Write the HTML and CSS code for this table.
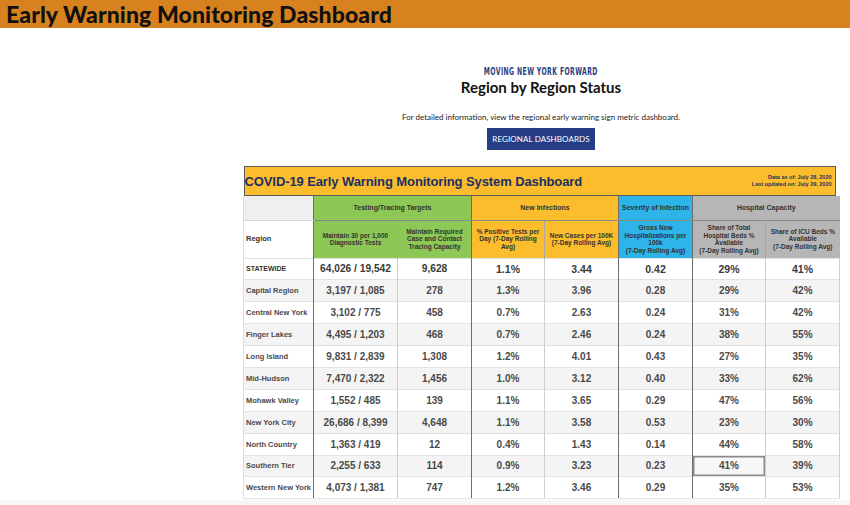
FILE: index.html
```html
<!DOCTYPE html>
<html>
<head>
<meta charset="utf-8">
<link rel="stylesheet" href="styles.css">
</head>
<body>
<header class="topbar"><h1>Early Warning Monitoring Dashboard</h1></header>
<main class="content">
  <div class="kicker"><span>MOVING NEW YORK FORWARD</span></div>
  <h2 class="status">Region by Region Status</h2>
  <p class="info">For detailed information, view the regional early warning sign metric dashboard.</p>
  <div class="btnwrap"><a class="btn">REGIONAL DASHBOARDS</a></div>
  <table class="dash">
    <colgroup>
      <col class="c-region"><col class="c2"><col class="c3"><col class="c4"><col class="c5"><col class="c6"><col class="c7"><col class="c8">
    </colgroup>
    <thead>
      <tr class="titlerow"><th colspan="8"><div class="titlebox"><span class="ttl">COVID-19 Early Warning Monitoring System Dashboard</span><span class="dates">Data as of: July 28, 2020<br>Last updated on: July 29, 2020</span></div></th></tr>
      <tr class="grouprow">
        <th class="blank"></th>
        <th colspan="2" class="green gl">Testing/Tracing Targets</th>
        <th colspan="2" class="yellow gl">New Infections</th>
        <th class="blue gl">Severity of Infection</th>
        <th colspan="2" class="gray gl">Hospital Capacity</th>
      </tr>
      <tr class="headrow">
        <th class="region">Region</th>
        <th class="green gl">Maintain 30 per 1,000 Diagnostic Tests</th>
        <th class="green">Maintain Required Case and Contact Tracing Capacity</th>
        <th class="yellow gl">% Positive Tests per Day (7-Day Rolling Avg)</th>
        <th class="yellow">New Cases per 100K (7-Day Rolling Avg)</th>
        <th class="blue gl">Gross New Hospitalizations per 100k<br>(7-Day Rolling Avg)</th>
        <th class="gray gl">Share of Total Hospital Beds % Available<br>(7-Day Rolling Avg)</th>
        <th class="gray">Share of ICU Beds % Available<br>(7-Day Rolling Avg)</th>
      </tr>
    </thead>
    <tbody>
      <tr class="state"><td class="region">STATEWIDE</td><td class="gl big">64,026 / 19,542</td><td class="big">9,628</td><td class="gl">1.1%</td><td>3.44</td><td class="gl">0.42</td><td class="gl">29%</td><td>41%</td></tr>
      <tr><td class="region">Capital Region</td><td class="gl big">3,197 / 1,085</td><td class="big">278</td><td class="gl">1.3%</td><td>3.96</td><td class="gl">0.28</td><td class="gl">29%</td><td>42%</td></tr>
      <tr><td class="region">Central New York</td><td class="gl big">3,102 / 775</td><td class="big">458</td><td class="gl">0.7%</td><td>2.63</td><td class="gl">0.24</td><td class="gl">31%</td><td>42%</td></tr>
      <tr><td class="region">Finger Lakes</td><td class="gl big">4,495 / 1,203</td><td class="big">468</td><td class="gl">0.7%</td><td>2.46</td><td class="gl">0.24</td><td class="gl">38%</td><td>55%</td></tr>
      <tr><td class="region">Long Island</td><td class="gl big">9,831 / 2,839</td><td class="big">1,308</td><td class="gl">1.2%</td><td>4.01</td><td class="gl">0.43</td><td class="gl">27%</td><td>35%</td></tr>
      <tr><td class="region">Mid-Hudson</td><td class="gl big">7,470 / 2,322</td><td class="big">1,456</td><td class="gl">1.0%</td><td>3.12</td><td class="gl">0.40</td><td class="gl">33%</td><td>62%</td></tr>
      <tr><td class="region">Mohawk Valley</td><td class="gl big">1,552 / 485</td><td class="big">139</td><td class="gl">1.1%</td><td>3.65</td><td class="gl">0.29</td><td class="gl">47%</td><td>56%</td></tr>
      <tr><td class="region">New York City</td><td class="gl big">26,686 / 8,399</td><td class="big">4,648</td><td class="gl">1.1%</td><td>3.58</td><td class="gl">0.53</td><td class="gl">23%</td><td>30%</td></tr>
      <tr><td class="region">North Country</td><td class="gl big">1,363 / 419</td><td class="big">12</td><td class="gl">0.4%</td><td>1.43</td><td class="gl">0.14</td><td class="gl">44%</td><td>58%</td></tr>
      <tr><td class="region">Southern Tier</td><td class="gl big">2,255 / 633</td><td class="big">114</td><td class="gl">0.9%</td><td>3.23</td><td class="gl">0.23</td><td class="gl focus">41%</td><td>39%</td></tr>
      <tr><td class="region">Western New York</td><td class="gl big">4,073 / 1,381</td><td class="big">747</td><td class="gl">1.2%</td><td>3.46</td><td class="gl">0.29</td><td class="gl">35%</td><td>53%</td></tr>
    </tbody>
  </table>
</main>
<div class="footband"></div>
</body>
</html>
```
FILE: styles.css
```css
* { box-sizing: border-box; }
html, body { margin: 0; padding: 0; background: #fff; }
body { font-family: "Liberation Sans", Arial, sans-serif; width: 850px; height: 505px; overflow: hidden; position: relative; }

.topbar { background: #d8821f; height: 28px; padding-left: 6px; }
.topbar h1 { margin: 0; font-family: Lato, "Open Sans", sans-serif; font-weight: 900; font-size: 23px; line-height: 28px; color: #111; letter-spacing: 0.1px; }

.content { margin-left: 243px; width: 596px; padding-top: 36px; text-align: center; }
.kicker { line-height: 12px; height: 12px; }
.kicker span { display: inline-block; font-family: "DejaVu Sans Condensed", "DejaVu Sans", sans-serif; font-stretch: condensed; font-weight: 700; font-size: 10px; color: #2c3e7e; letter-spacing: 0.6px; transform: scaleX(0.68); transform-origin: center; white-space: nowrap; }
.status { margin: 2px 0 0; font-family: Lato, sans-serif; font-weight: 700; font-size: 15px; line-height: 18px; color: #111; }
.info { margin: 16px 0 0; font-family: Lato, sans-serif; font-size: 8px; line-height: 10px; color: #222; }
.btnwrap { margin-top: 6px; }
.btn { display: inline-block; background: #243d86; color: #fff; font-family: Lato, sans-serif; font-size: 8px; width: 108px; height: 22px; line-height: 22px; letter-spacing: 0.1px; }

.dash { margin-top: 16px; border-collapse: collapse; table-layout: fixed; width: 596px; font-family: "Liberation Sans", Arial, sans-serif; }
.c-region { width: 70px; }
.c2 { width: 84px; }
.c3 { width: 74px; }
.c4 { width: 73px; }
.c5 { width: 74px; }
.c6 { width: 74px; }
.c7 { width: 73px; }
.c8 { width: 74px; }

.titlerow th { padding: 0 4px 0 0; height: 30px; }
.titlebox { display: flex; justify-content: space-between; align-items: center; height: 30px; background: #fbbd2c; border: 1.5px solid #5a5a5a; padding: 0 3px 0 0; }
.ttl { font-size: 13px; font-weight: 700; color: #1d2f66; letter-spacing: -0.1px; }
.dates { font-size: 5.5px; font-weight: 700; color: #243060; text-align: right; line-height: 7px; }

.grouprow th { height: 24px; font-size: 7px; font-weight: 700; color: #333; border-bottom: 1px solid #8a8a8a; }
.grouprow .blank { background: #efefef; border-bottom: 1px solid #d8d8d8; border-left: 1px solid #ddd; }
.headrow th { height: 38px; font-size: 6.5px; font-weight: 700; color: #333; line-height: 7.5px; padding: 0 3px; border-left: 1px solid #a8a8a8; }
.headrow th.region { text-align: left; font-size: 7.5px; padding-left: 2px; color: #333; background: #fff; border-left: 1px solid #ddd; }
.green { background: #8dc755; }
.yellow { background: #fbbd2c; }
.blue { background: #2db4e9; }
.gray { background: #b6b6b6; }
th.gl, td.gl { border-left: 1.5px solid #6d6d6d !important; }

tbody td { height: 21.9px; padding: 0; text-align: center; font-size: 10px; font-weight: 700; color: #4a4a4a; border-top: 1px solid #e2e2e2; border-left: 1px solid #cfcfcf; }
tbody td.big { font-size: 10px; }
tbody td.region { text-align: left; padding-left: 2px; font-size: 7.5px; color: #4a4a4a; border-left: 1px solid #ddd; }
tbody tr:nth-child(even) td { background: #f4f4f4; }
tbody tr td:last-child { border-right: 1px solid #cfcfcf; }
tbody tr:last-child td { border-bottom: 1px solid #e2e2e2; }
tbody tr.state td { font-size: 10.5px; color: #3a3a3a; }
tbody tr.state td.big { font-size: 10.2px; }
tbody tr.state td.region { font-size: 7px; color: #333; }
tbody td.focus { box-shadow: inset 0 0 0 1.5px #8a8a8a; background: #f7f7f7 !important; }

.footband { position: absolute; left: 0; right: 0; bottom: 0; height: 5px; background: #f6f6f6; }
```
